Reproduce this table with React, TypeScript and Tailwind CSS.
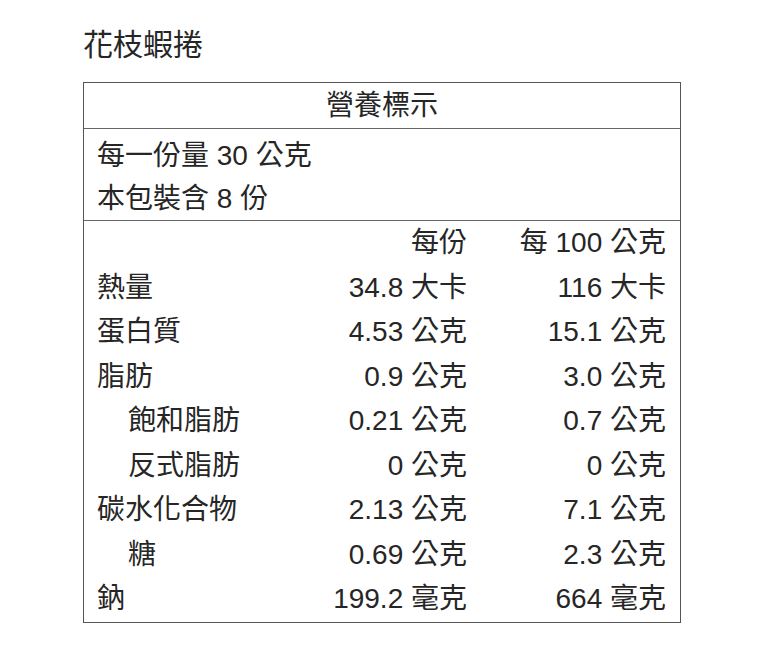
import React from "react";

const rows: { label: string; indent?: boolean; a: string; b: string }[] = [
  { label: "熱量", a: "34.8 大卡", b: "116 大卡" },
  { label: "蛋白質", a: "4.53 公克", b: "15.1 公克" },
  { label: "脂肪", a: "0.9 公克", b: "3.0 公克" },
  { label: "飽和脂肪", indent: true, a: "0.21 公克", b: "0.7 公克" },
  { label: "反式脂肪", indent: true, a: "0 公克", b: "0 公克" },
  { label: "碳水化合物", a: "2.13 公克", b: "7.1 公克" },
  { label: "糖", indent: true, a: "0.69 公克", b: "2.3 公克" },
  { label: "鈉", a: "199.2 毫克", b: "664 毫克" },
];

export default function App() {
  return (
    <div
      className="w-[768px] h-[652px] bg-white text-[#262626] pl-[83px] pt-[27px]"
      style={{ fontFamily: '"Liberation Sans", "Noto Sans CJK TC", sans-serif' }}
    >
      <div className="text-[30px] leading-[36px]">花枝蝦捲</div>
      <div className="mt-[19px] w-[598px] border-[1.5px] border-[#555] text-[28px]">
        <div className="h-[46px] flex items-center justify-center border-b-[1.5px] border-[#666]">
          營養標示
        </div>
        <div className="pt-[5px] pl-[13px] border-b-[1.5px] border-[#666] leading-[43px]">
          <div>每一份量 30 公克</div>
          <div>本包裝含 8 份</div>
        </div>
        <div className="grid grid-cols-[199px_198px_1fr] h-[44.5px] items-center">
          <div></div>
          <div className="text-right pr-[14px]">每份</div>
          <div className="text-right pr-[14px]">每 100 公克</div>
        </div>
        {rows.map((r) => (
          <div key={r.label} className="grid grid-cols-[199px_198px_1fr] h-[44.5px] items-center">
            <div className={r.indent ? "pl-[44px]" : "pl-[13px]"}>{r.label}</div>
            <div className="text-right pr-[14px]">{r.a}</div>
            <div className="text-right pr-[14px]">{r.b}</div>
          </div>
        ))}
      </div>
    </div>
  );
}
